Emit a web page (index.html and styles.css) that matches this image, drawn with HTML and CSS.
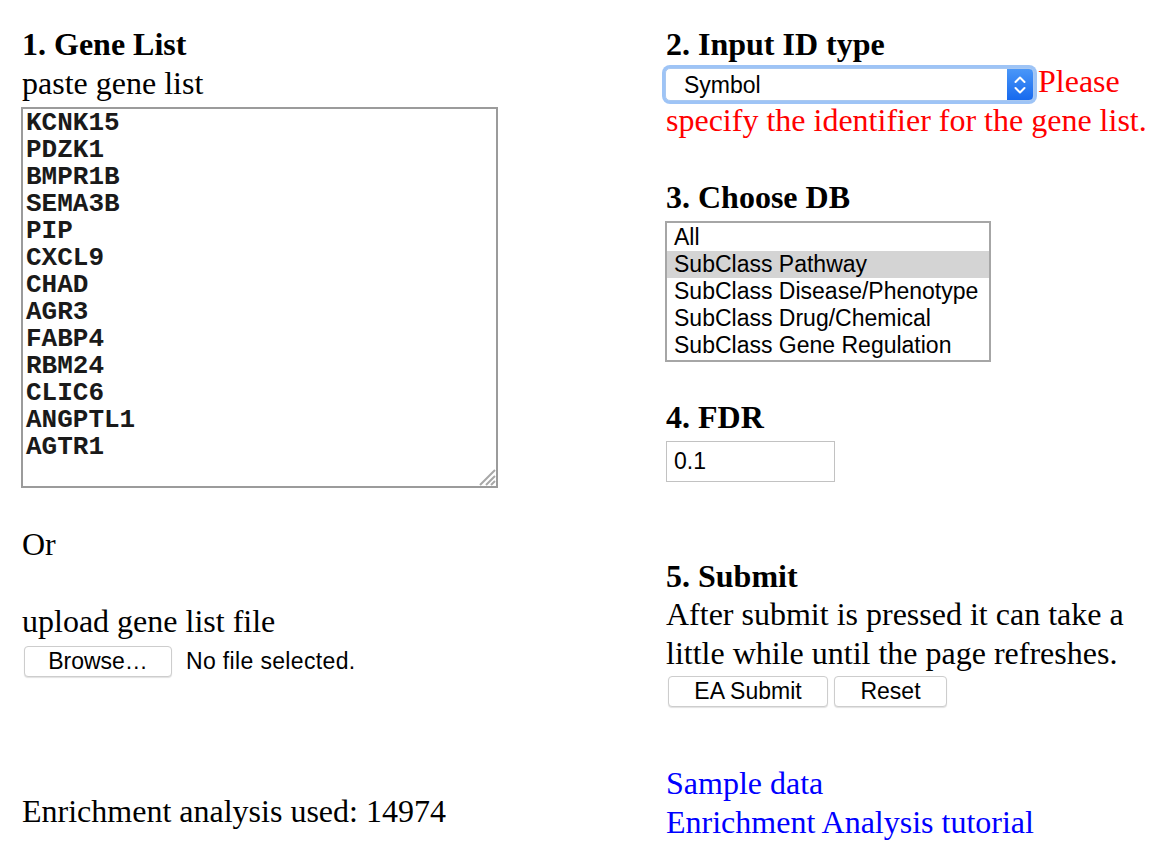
FILE: index.html
```html
<!DOCTYPE html>
<html>
<head>
<meta charset="utf-8">
<title>Enrichment Analysis</title>
<link rel="stylesheet" href="styles.css">
</head>
<body>
<div class="page">
  <div class="col col-left">
    <div class="heading">1. Gene List</div>
    <div class="line">paste gene list</div>
    <div class="ta-wrap">
      <textarea class="genes" spellcheck="false">KCNK15
PDZK1
BMPR1B
SEMA3B
PIP
CXCL9
CHAD
AGR3
FABP4
RBM24
CLIC6
ANGPTL1
AGTR1</textarea>
      <svg class="grip" width="22" height="22" viewBox="0 0 22 22"><path d="M21 6 L6 21 M21 12 L12 21 M21 17 L17 21" stroke="#a8a8a8" stroke-width="2" fill="none"/></svg>
    </div>
    <div class="line or">Or</div>
    <div class="line upload">upload gene list file</div>
    <div class="file-row">
      <button class="btn browse" type="button">Browse…</button>
      <span class="nofile">No file selected.</span>
    </div>
    <div class="line used">Enrichment analysis used: 14974</div>
  </div>

  <div class="col col-right">
    <div class="heading">2. Input ID type</div>
    <div class="line idline"><span class="select"><span class="select-text">Symbol</span><span class="stepper"><svg width="14" height="24" viewBox="0 0 14 24"><path d="M2.5 9 L7 4.5 L11.5 9 M2.5 15 L7 19.5 L11.5 15" stroke="#fff" stroke-width="2" fill="none" stroke-linecap="round" stroke-linejoin="round"/></svg></span></span><span class="warn">Please</span> <span class="warn">specify the identifier for the gene list.</span></div>
    <div class="heading h-db">3. Choose DB</div>
    <div class="listbox">
      <div class="opt">All</div>
      <div class="opt sel">SubClass Pathway</div>
      <div class="opt">SubClass Disease/Phenotype</div>
      <div class="opt">SubClass Drug/Chemical</div>
      <div class="opt">SubClass Gene Regulation</div>
    </div>
    <div class="heading h-fdr">4. FDR</div>
    <input class="fdr" type="text" value="0.1">
    <div class="heading h-submit">5. Submit</div>
    <div class="line note">After submit is pressed it can take a little while until the page refreshes.</div>
    <div class="btn-row">
      <button class="btn ea" type="button">EA Submit</button>
      <button class="btn reset" type="button">Reset</button>
    </div>
    <div class="links">
      <a class="link" href="#">Sample data</a>
      <a class="link" href="#">Enrichment Analysis tutorial</a>
    </div>
  </div>
</div>
</body>
</html>
```
FILE: styles.css
```css
html, body {
  margin: 0;
  padding: 0;
  background: #fff;
}
body {
  font-family: "Liberation Serif", "Times New Roman", serif;
  font-size: 32px;
  line-height: 39px;
  color: #000;
}
.page {
  display: flex;
  padding-left: 22px;
}
.col {
  display: flex;
  flex-direction: column;
  align-items: flex-start;
  padding-top: 25px;
}
.col-left {
  width: 644px;
}
.col-right {
  width: 490px;
}
.heading {
  font-weight: bold;
}

/* textarea */
.ta-wrap {
  position: relative;
  margin-top: 4px;
  margin-left: -1px;
  width: 477px;
  height: 381px;
}
.genes {
  box-sizing: border-box;
  width: 477px;
  height: 381px;
  margin: 0;
  border: 2px solid #9b9b9b;
  padding: 1px 3px;
  font-family: "Liberation Mono", "Courier New", monospace;
  font-size: 26px;
  line-height: 27px;
  font-weight: bold;
  color: #1a1a1a;
  resize: none;
  outline: none;
  background: #fff;
  overflow: hidden;
  display: block;
}
.grip {
  position: absolute;
  right: 2px;
  bottom: 2px;
}

.or {
  margin-top: 37px;
}
.upload {
  margin-top: 38px;
}
.file-row {
  margin-top: 5px;
  margin-left: 2px;
  display: flex;
  align-items: center;
  gap: 14px;
}
.btn {
  box-sizing: border-box;
  height: 31px;
  margin: 0;
  padding: 0;
  background: #fff;
  border: 1px solid #cdcdcd;
  border-radius: 4px;
  box-shadow: 0 1px 1px rgba(0,0,0,0.12);
  font-family: "Liberation Sans", Arial, sans-serif;
  font-size: 23px;
  line-height: 29px;
  color: #000;
  text-align: center;
}
.browse {
  width: 148px;
}
.nofile {
  font-family: "Liberation Sans", Arial, sans-serif;
  font-size: 23px;
  letter-spacing: 0.35px;
  line-height: 31px;
}
.used {
  margin-top: 115px;
}

/* right column */
.idline {
  margin-top: -2px;
}
.select {
  position: relative;
  display: inline-flex;
  vertical-align: top;
  box-sizing: border-box;
  width: 369px;
  height: 33px;
  margin-top: 6px;
  margin-left: -1px;
  margin-right: 4px;
  background: #fff;
  border: 1px solid #a9c8f0;
  border-radius: 5px;
  box-shadow: 0 0 0 3px #9ec4f6;
  font-family: "Liberation Sans", Arial, sans-serif;
  font-size: 23px;
  line-height: 32px;
}
.select-text {
  flex: 1;
  padding-left: 18px;
}
.stepper {
  width: 26px;
  height: 31px;
  display: flex;
  align-items: center;
  justify-content: center;
  background: linear-gradient(#4a97f8, #1769ee);
  border-radius: 0 4px 4px 0;
}
.warn {
  color: #ff0000;
}
.h-db {
  margin-top: 38px;
}
.listbox {
  box-sizing: border-box;
  width: 326px;
  height: 141px;
  margin-top: 4px;
  margin-left: -1px;
  border: 2px solid #a6a6a6;
  padding: 1px 0;
  background: #fff;
  font-family: "Liberation Sans", Arial, sans-serif;
  font-size: 23px;
  line-height: 27px;
}
.opt {
  height: 27px;
  padding-left: 7px;
  white-space: nowrap;
}
.opt.sel {
  background: #d4d4d4;
}
.h-fdr {
  margin-top: 36px;
}
.fdr {
  box-sizing: border-box;
  width: 169px;
  height: 41px;
  margin: 4px 0 0 0;
  border: 1px solid #c2c2c2;
  padding: 0 7px;
  font-family: "Liberation Sans", Arial, sans-serif;
  font-size: 23px;
  color: #000;
  outline: none;
}
.h-submit {
  margin-top: 75px;
}
.note {
  margin-top: -1px;
}
.btn-row {
  margin-top: 3px;
  margin-left: 2px;
  display: flex;
  gap: 6px;
}
.ea {
  width: 160px;
}
.reset {
  width: 113px;
}
.links {
  margin-top: 57px;
  display: flex;
  flex-direction: column;
}
.link {
  color: #0000ff;
  text-decoration: none;
}
```
